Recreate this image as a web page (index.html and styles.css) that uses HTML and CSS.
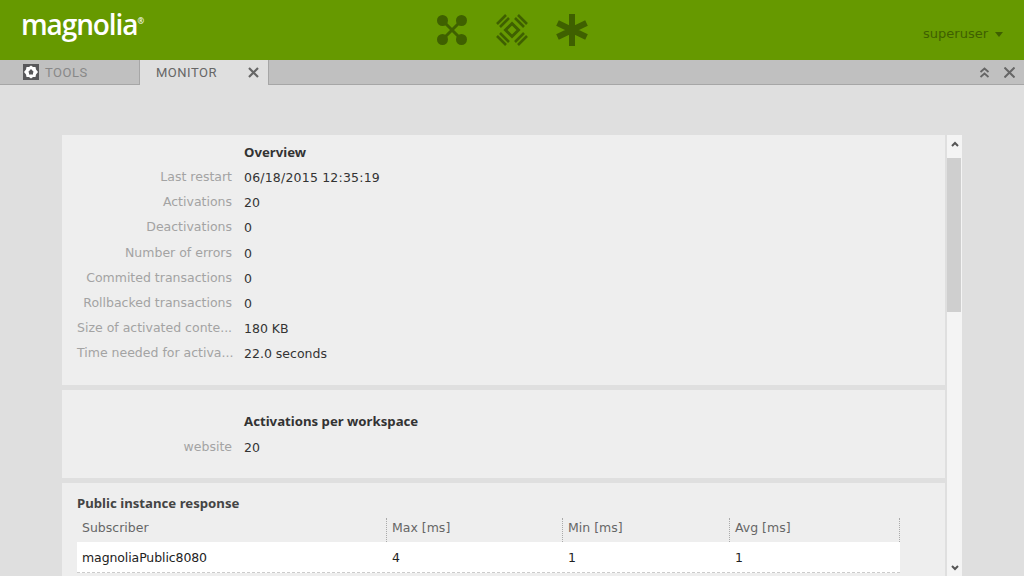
FILE: index.html
```html
<!DOCTYPE html>
<html lang="en">

<head>
    <meta charset="UTF-8">
    <meta name="viewport" content="width=device-width, initial-scale=1.0">
    <title>Magnolia Monitor</title>
    <link rel="stylesheet" href="styles.css">
</head>

<body>
    <header class="top-bar">
        <div class="logo">magnolia<span class="logo-reg">®</span></div>
        <nav class="app-icons">
            <svg class="app-icon" viewBox="0 0 32 32">
                <path d="M7 7L25 25M25 7L7 25" stroke="#3f6000" stroke-width="3"/>
                <circle cx="6.500" cy="6.500" r="5.500" fill="#3f6000"/>
                <circle cx="25.500" cy="6.500" r="5.500" fill="#3f6000"/>
                <circle cx="6.500" cy="25.500" r="5.500" fill="#3f6000"/>
                <circle cx="25.500" cy="25.500" r="5.500" fill="#3f6000"/>
            </svg>
            <svg class="app-icon" viewBox="0 0 32 32">
                <path d="M16 9.500L22.500 16L16 22.500L9.500 16Z" fill="none" stroke="#3f6000" stroke-width="3"/>
                <path d="M1 10L10 1M4 13L13 4M19 4L28 13M22 1L31 10M4 19L13 28M1 22L10 31M19 28L28 19M22 31L31 22" stroke="#3f6000" stroke-width="2.600"/>
            </svg>
            <svg class="app-icon" viewBox="0 0 32 32">
                <path d="M16 0V32M1.500 9L30.500 23M30.500 9L1.500 23" stroke="#3f6000" stroke-width="6"/>
            </svg>
        </nav>
        <div class="user-menu">superuser<span class="caret"></span></div>
    </header>

    <div class="tab-bar">
        <div class="tab">
            <span class="home-icon">
                <svg viewBox="0 0 16 16">
                    <path d="M8 1.500L10 3L12.500 3L13 5.500L15 8L13 10.500L12.500 13L10 13L8 14.500L6 13L3.500 13L3 10.500L1 8L3 5.500L3.500 3L6 3Z" fill="#fff"/>
                    <path d="M8 5L11 8.200H10V10.500H6V8.200H5Z" fill="#58585a"/>
                </svg>
            </span>
            TOOLS
        </div>
        <div class="tab tab-active">
            MONITOR
            <svg class="tab-close" viewBox="0 0 11 11">
                <path d="M1 1L10 10M10 1L1 10" stroke="#666" stroke-width="2.200"/>
            </svg>
        </div>
        <div class="tab-actions">
            <svg class="action-icon" viewBox="0 0 11 11">
                <path d="M1.500 5L5.500 1.500L9.500 5M1.500 10L5.500 6.500L9.500 10" fill="none" stroke="#666" stroke-width="1.800"/>
            </svg>
            <svg class="action-icon" viewBox="0 0 11 11">
                <path d="M0.500 0.500L10.500 10.500M10.500 0.500L0.500 10.500" stroke="#666" stroke-width="2"/>
            </svg>
        </div>
    </div>

    <main class="stage">
        <div class="panel">
            <div class="panel-scroll">
                <section class="section section-overview">
                    <div class="row row-head"><span class="row-label"></span><span class="row-title">Overview</span></div>
                    <div class="row"><span class="row-label">Last restart</span><span class="row-value value-date">06/18/2015 12:35:19</span></div>
                    <div class="row"><span class="row-label">Activations</span><span class="row-value">20</span></div>
                    <div class="row"><span class="row-label">Deactivations</span><span class="row-value">0</span></div>
                    <div class="row"><span class="row-label">Number of errors</span><span class="row-value">0</span></div>
                    <div class="row"><span class="row-label">Commited transactions</span><span class="row-value">0</span></div>
                    <div class="row"><span class="row-label">Rollbacked transactions</span><span class="row-value">0</span></div>
                    <div class="row"><span class="row-label">Size of activated conte...</span><span class="row-value">180 KB</span></div>
                    <div class="row"><span class="row-label">Time needed for activa...</span><span class="row-value">22.0 seconds</span></div>
                </section>
                <section class="section section-workspace">
                    <div class="row row-head"><span class="row-label"></span><span class="row-title">Activations per workspace</span></div>
                    <div class="row"><span class="row-label">website</span><span class="row-value">20</span></div>
                </section>
                <section class="section section-response">
                    <div class="table-title">Public instance response</div>
                    <div class="table-row table-head">
                        <span class="cell cell-name">Subscriber</span>
                        <span class="cell cell-max">Max [ms]</span>
                        <span class="cell cell-min">Min [ms]</span>
                        <span class="cell cell-avg">Avg [ms]</span>
                    </div>
                    <div class="table-row table-body">
                        <span class="cell cell-name">magnoliaPublic8080</span>
                        <span class="cell cell-max">4</span>
                        <span class="cell cell-min">1</span>
                        <span class="cell cell-avg">1</span>
                    </div>
                </section>
            </div>
            <div class="scrollbar">
                <svg class="scroll-arrow" viewBox="0 0 8 6">
                    <path d="M1 5L4 2L7 5" fill="none" stroke="#555" stroke-width="2"/>
                </svg>
                <div class="scroll-track"><div class="scroll-thumb"></div></div>
                <svg class="scroll-arrow" viewBox="0 0 8 6">
                    <path d="M1 1L4 4L7 1" fill="none" stroke="#555" stroke-width="2"/>
                </svg>
            </div>
        </div>
    </main>
</body>

</html>
```

FILE: styles.css
```css
html, body {
    height: 100%;
}

body {
    margin: 0;
    overflow: hidden;
    display: flex;
    flex-direction: column;
    background: #dfdfdf;
    font-family: "DejaVu Sans", Verdana, sans-serif;
    font-size: 12.500px;
    color: #333;
}

.top-bar {
    flex: none;
    height: 60px;
    display: flex;
    align-items: center;
    justify-content: space-between;
    box-sizing: border-box;
    padding: 0 21px 0 21px;
    background: #669900;
}

.logo {
    width: 200px;
    margin-top: -12px;
    font-family: "Open Sans", sans-serif;
    font-size: 28px;
    font-weight: 600;
    letter-spacing: -1.100px;
    color: #fff;
}

.logo-reg {
    position: relative;
    top: -11px;
    font-size: 8px;
}

.app-icons {
    display: flex;
    gap: 28px;
}

.app-icon {
    width: 32px;
    height: 32px;
}

.user-menu {
    width: 200px;
    margin-top: 7px;
    display: flex;
    align-items: center;
    justify-content: flex-end;
    font-size: 13px;
    color: #3f6000;
}

.caret {
    width: 0;
    height: 0;
    margin-left: 7px;
    margin-top: 2px;
    border-left: 4.500px solid transparent;
    border-right: 4.500px solid transparent;
    border-top: 5px solid #3f6000;
}

.tab-bar {
    flex: none;
    height: 25px;
    display: flex;
    box-sizing: border-box;
    border-bottom: 1px solid #a6a6a6;
    background: #c0c0c0;
    font-family: "Roboto", sans-serif;
    font-size: 13px;
    letter-spacing: 0.500px;
    color: #888;
}

.tab {
    width: 140px;
    height: 24px;
    display: flex;
    align-items: center;
    box-sizing: border-box;
    padding-left: 23px;
    border-right: 1px solid #a6a6a6;
}

.tab-active {
    width: 129px;
    height: 25px;
    padding-left: 16px;
    background: #dfdfdf;
    color: #666;
}

.home-icon {
    width: 16px;
    height: 16px;
    margin-right: 6px;
    background: #58585a;
}

.home-icon svg {
    display: block;
}

.tab-close {
    width: 11px;
    height: 11px;
    margin-left: auto;
    margin-right: 9px;
}

.tab-actions {
    margin-left: auto;
    display: flex;
    align-items: center;
    gap: 14px;
    padding-right: 9px;
}

.action-icon {
    width: 11px;
    height: 11px;
}

.stage {
    flex: 1;
    min-height: 0;
    padding: 50px 62px 0 62px;
    overflow: hidden;
}

.panel {
    height: 100%;
    display: flex;
    gap: 2px;
}

.panel-scroll {
    flex: 1;
    min-width: 0;
    overflow: hidden;
    display: flex;
    flex-direction: column;
    gap: 5px;
}

.section {
    flex: none;
    background: #eeeeee;
}

.section-overview {
    height: 250px;
    padding-top: 5px;
    box-sizing: border-box;
}

.section-workspace {
    height: 88px;
    padding-top: 18px;
    box-sizing: border-box;
}

.section-response {
    flex: 1;
    padding: 11px 45px 0 15px;
}

.row {
    height: 25.200px;
    display: flex;
    align-items: center;
}

.row-label {
    width: 155px;
    padding: 0 12px 0 15px;
    margin-top: -2px;
    flex: none;
    text-align: right;
    color: #a3a3a3;
    white-space: nowrap;
    overflow: hidden;
}

.row-value {
    color: #333;
}

.value-date {
    letter-spacing: 0.200px;
}

.row-head {
    height: 25px;
}

.section-workspace .row-head {
    height: 27px;
}

.row-title {
    margin-top: -2px;
    font-family: "Noto Sans", sans-serif;
    font-weight: 700;
    font-size: 13.200px;
    color: #333;
}

.table-title {
    height: 24px;
    font-family: "Noto Sans", sans-serif;
    font-weight: 700;
    font-size: 13.200px;
    color: #444;
}

.table-row {
    display: flex;
    align-items: center;
}

.table-head {
    height: 24px;
    color: #666;
}

.table-body {
    height: 30px;
    background: #fff;
    color: #222;
    letter-spacing: -0.100px;
    border-bottom: 1px dashed #ccc;
}

.cell {
    box-sizing: border-box;
    padding-left: 5px;
}

.table-head .cell {
    height: 24px;
    line-height: 19px;
    border-right: 1px dotted #aaa;
}

.cell-name {
    width: 310px;
}

.cell-max {
    width: 176px;
}

.cell-min {
    width: 167px;
}

.cell-avg {
    flex: 1;
}

.scrollbar {
    flex: none;
    width: 15px;
    display: flex;
    flex-direction: column;
    background: #f4f4f4;
}

.scroll-arrow {
    flex: none;
    width: 8px;
    height: 6px;
    margin: 6px auto 11px;
}

.scroll-arrow:last-child {
    margin: 4px auto 5px;
}

.scroll-track {
    flex: 1;
}

.scroll-thumb {
    height: 154px;
    width: 14px;
    background: #cfcfcf;
}
```
